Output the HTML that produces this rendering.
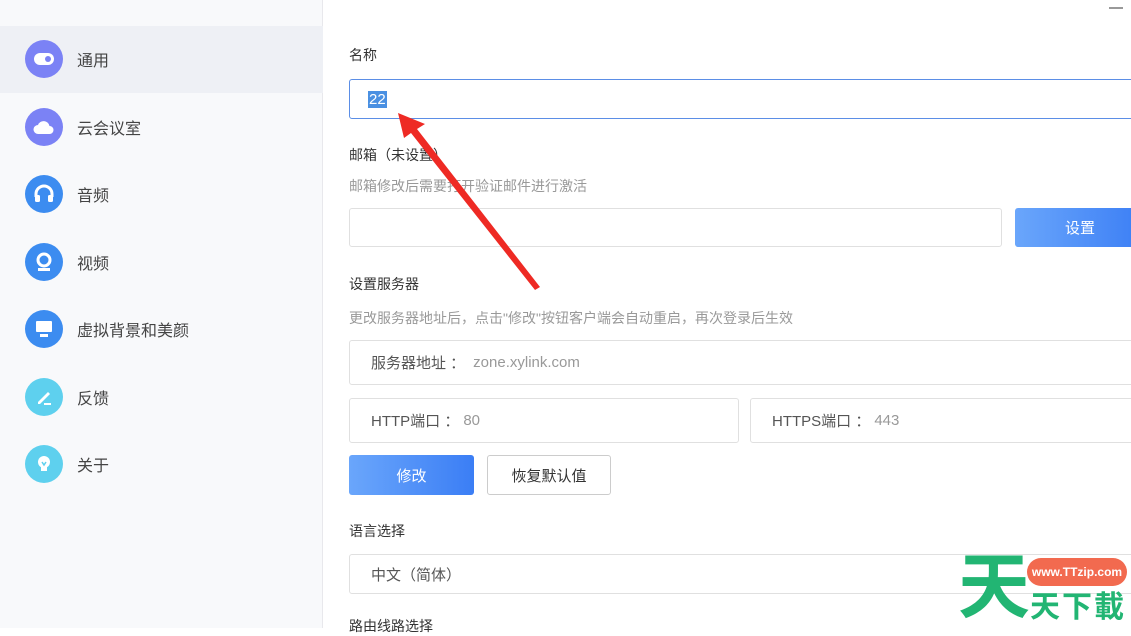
<!DOCTYPE html>
<html><head><meta charset="utf-8"><style>
*{margin:0;padding:0;box-sizing:border-box}
body{width:1131px;height:628px;overflow:hidden;background:#fff;font-family:"Liberation Sans","Noto Sans CJK SC",sans-serif;position:relative;color:#333}
.side{position:absolute;left:0;top:0;width:323px;height:628px;background:#f8f9fb;border-right:1px solid #e8e8ec}
.sel{position:absolute;left:0;top:26px;width:323px;height:67px;background:#eef0f5}
.it{position:absolute;left:25px;height:38px;display:flex;align-items:center;font-size:16px;color:#444}
.ic{width:38px;height:38px;border-radius:50%;margin-right:14px;display:flex;align-items:center;justify-content:center}
.a{position:absolute;font-size:14px}
.lbl{color:#333;font-size:14px}
.hint{color:#999;font-size:14px}
.box{position:absolute;border:1px solid #e0e0e0;border-radius:3px;background:#fff;font-size:15px;color:#555;display:flex;align-items:center;padding-left:21px}
.btn{position:absolute;border-radius:3px;color:#fff;display:flex;align-items:center;justify-content:center;font-size:15px;background:linear-gradient(90deg,#6aa6fb,#3b7ef5)}
</style></head><body>
<div class="side"><div class="sel"></div>
<div class="it" style="top:40px"><div class="ic" style="background:#7b82f5"><div style="width:20px;height:12px;border-radius:6px;background:#fff;position:relative"><div style="position:absolute;right:3px;top:3px;width:6px;height:6px;border-radius:50%;background:#7b82f5"></div></div></div>通用</div>
<div class="it" style="top:108px"><div class="ic" style="background:#7b82f5"><svg width="22" height="16"><path d="M5 15a4.5 4.5 0 0 1 0-9 6 6 0 0 1 11.5 1 4 4 0 0 1 0 8z" fill="#fff"/></svg></div>云会议室</div>
<div class="it" style="top:175px"><div class="ic" style="background:#3c8cf0"><svg width="22" height="20"><path d="M3 13v-3a8 8 0 0 1 16 0v3" stroke="#fff" stroke-width="3" fill="none"/><rect x="2" y="11" width="5" height="7" rx="1.5" fill="#fff"/><rect x="15" y="11" width="5" height="7" rx="1.5" fill="#fff"/></svg></div>音频</div>
<div class="it" style="top:243px"><div class="ic" style="background:#3c8cf0"><svg width="22" height="22"><circle cx="11" cy="9" r="6" stroke="#fff" stroke-width="3" fill="none"/><rect x="5" y="17" width="12" height="3" fill="#fff"/></svg></div>视频</div>
<div class="it" style="top:310px"><div class="ic" style="background:#3c8cf0"><svg width="22" height="22"><rect x="3" y="3" width="16" height="11" rx="1" fill="#fff"/><rect x="7" y="16" width="8" height="3" fill="#fff"/></svg></div>虚拟背景和美颜</div>
<div class="it" style="top:378px"><div class="ic" style="background:#5ed0ee"><svg width="22" height="22"><path d="M5 16l10-10 2 2-10 10h-2z" fill="#fff"/><rect x="11" y="17" width="7" height="2" fill="#fff"/></svg></div>反馈</div>
<div class="it" style="top:445px"><div class="ic" style="background:#5ed0ee"><svg width="22" height="22"><circle cx="11" cy="9" r="6" fill="#fff"/><rect x="8" y="14" width="6" height="4" fill="#fff"/><path d="M9 9l2 3 2-3" stroke="#5ed0ee" stroke-width="1.5" fill="none"/></svg></div>关于</div>
</div>
<div style="position:absolute;left:1109px;top:7px;width:14px;height:2px;background:#999"></div>
<div class="a lbl" style="left:349px;top:45px">名称</div>
<div class="box" style="left:349px;top:79px;width:790px;height:40px;border-color:#5b8ee6;padding-left:18px"><span style="background:#4a90e2;color:#fff;padding:0 1px">22</span></div>
<div class="a lbl" style="left:349px;top:145px">邮箱（未设置）</div>
<div class="a hint" style="left:349px;top:176px">邮箱修改后需要打开验证邮件进行激活</div>
<div class="box" style="left:349px;top:208px;width:653px;height:39px"></div>
<div class="btn" style="left:1015px;top:208px;width:130px;height:39px">设置</div>
<div class="a lbl" style="left:349px;top:274px">设置服务器</div>
<div class="a hint" style="left:349px;top:308px">更改服务器地址后，点击"修改"按钮客户端会自动重启，再次登录后生效</div>
<div class="box" style="left:349px;top:340px;width:790px;height:45px">服务器地址 ：<span style="color:#999;margin-left:8px">zone.xylink.com</span></div>
<div class="box" style="left:349px;top:398px;width:390px;height:45px">HTTP端口 ：<span style="color:#999;margin-left:4px">80</span></div>
<div class="box" style="left:750px;top:398px;width:390px;height:45px">HTTPS端口 ：<span style="color:#999;margin-left:4px">443</span></div>
<div class="btn" style="left:349px;top:455px;width:125px;height:40px">修改</div>
<div class="box" style="left:487px;top:455px;width:124px;height:40px;justify-content:center;padding:0;border-color:#ccc;color:#333">恢复默认值</div>
<div class="a lbl" style="left:349px;top:521px">语言选择</div>
<div class="box" style="left:349px;top:554px;width:790px;height:40px">中文（简体）</div>
<div class="a lbl" style="left:349px;top:616px">路由线路选择</div>
<svg style="position:absolute;left:0;top:0" width="1131" height="628"><path d="M398 113 L425 124 L417 129 L540 287 L535 290 L411 133 L404 138 Z" fill="#ee2a24"/></svg>
<div style="position:absolute;left:958px;top:552px;font-size:72px;line-height:72px;font-weight:bold;color:#22b573">天</div>
<div style="position:absolute;left:1030px;top:592px;font-size:30px;line-height:32px;font-weight:bold;color:#22b573;letter-spacing:2px">天下載</div>
<div style="position:absolute;left:1027px;top:558px;width:100px;height:28px;border-radius:14px;background:#f26a4f;color:#fff;font-size:12px;font-weight:bold;display:flex;align-items:center;justify-content:center">www.TTzip.com</div>
</body></html>
